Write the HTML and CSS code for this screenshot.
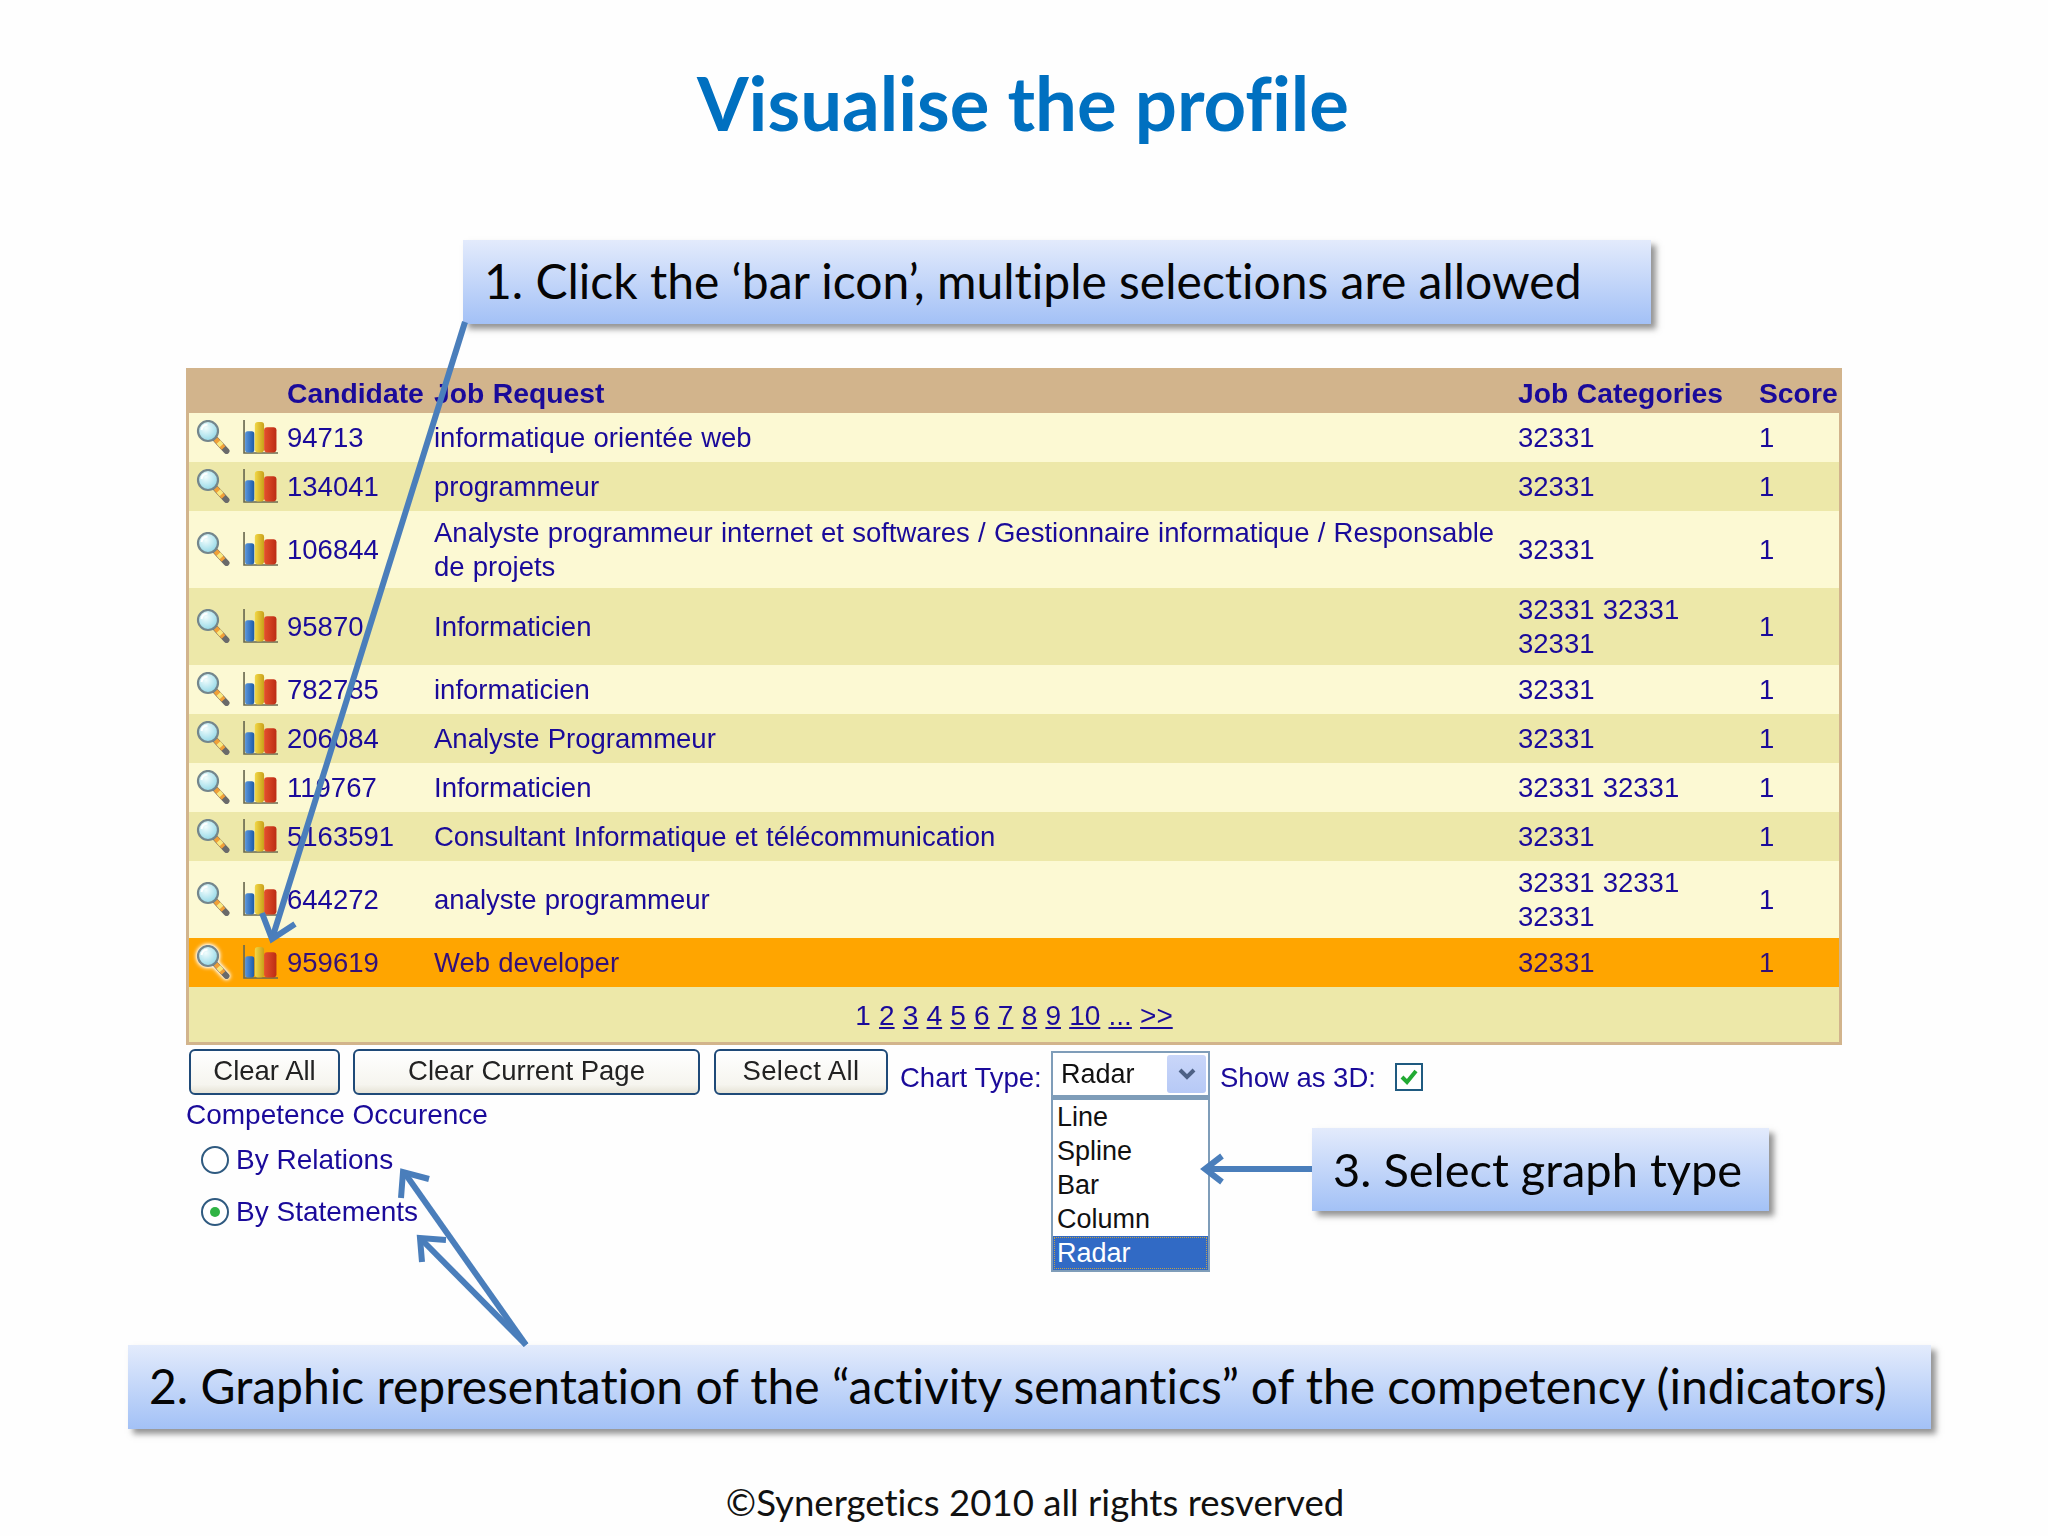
FILE: index.html
```html
<!DOCTYPE html>
<html lang="en">
<head>
<meta charset="utf-8">
<title>Visualise the profile</title>
<link rel="stylesheet" href="styles.css">
</head>
<body>
<svg class="defs" width="0" height="0" aria-hidden="true">
  <defs>
    <radialGradient id="lens" cx="40%" cy="35%" r="70%"><stop offset="0" stop-color="#f2fdfd"/><stop offset="1" stop-color="#8fd6e6"/></radialGradient>
    <linearGradient id="blueBar" x1="0" x2="1"><stop offset="0" stop-color="#5a96dc"/><stop offset="1" stop-color="#1c5aa8"/></linearGradient>
    <linearGradient id="yellowBar" x1="0" x2="1"><stop offset="0" stop-color="#f2d848"/><stop offset="1" stop-color="#c8a018"/></linearGradient>
    <linearGradient id="redBar" x1="0" x2="1"><stop offset="0" stop-color="#e4502c"/><stop offset="1" stop-color="#bc2c14"/></linearGradient>
    <symbol id="icon-lens" viewBox="0 0 34 34">
      <path d="M17 17 L30 31" stroke="#6a6a6a" stroke-width="6" stroke-linecap="round"/>
      <path d="M19 19 L27 28" stroke="#f0a038" stroke-width="5"/>
      <path d="M22 22 L25 25.5" stroke="#f8e880" stroke-width="5"/>
      <circle cx="11.5" cy="11" r="10" fill="url(#lens)" stroke="#74868c" stroke-width="2.2"/>
      <path d="M5 10 A6.5 6.5 0 0 1 11 4.5" fill="none" stroke="#fff" stroke-width="2"/>
    </symbol>
    <symbol id="icon-bars" viewBox="0 0 34 33">
      <path d="M1 0 V32 H34" fill="none" stroke="#6a6a50" stroke-width="1.6"/>
      <rect x="2" y="11" width="9" height="20.5" rx="2.5" fill="url(#blueBar)"/>
      <rect x="11.5" y="2" width="9" height="29.5" rx="3" fill="url(#yellowBar)"/>
      <rect x="20.5" y="7" width="12" height="24.5" rx="3" fill="url(#redBar)"/>
    </symbol>
  </defs>
</svg>
<main class="slide">
  <h1 class="title">Visualise the profile</h1>
  <div class="callout callout-one">1. Click the ‘bar icon’, multiple selections are allowed</div>

  <div class="shot">
    <table class="grid">
      <colgroup><col class="c-icons"><col class="c-id"><col class="c-job"><col class="c-cat"><col class="c-score"></colgroup>
      <thead>
        <tr><th></th><th>Candidate</th><th>Job Request</th><th>Job Categories</th><th>Score</th></tr>
      </thead>
      <tbody>
        <tr><td class="icons"><svg class="ico"><use href="#icon-lens"/></svg><svg class="ico"><use href="#icon-bars"/></svg></td><td>94713</td><td>informatique orientée web</td><td>32331</td><td>1</td></tr>
        <tr class="alt"><td class="icons"><svg class="ico"><use href="#icon-lens"/></svg><svg class="ico"><use href="#icon-bars"/></svg></td><td>134041</td><td>programmeur</td><td>32331</td><td>1</td></tr>
        <tr><td class="icons"><svg class="ico"><use href="#icon-lens"/></svg><svg class="ico"><use href="#icon-bars"/></svg></td><td>106844</td><td>Analyste programmeur internet et softwares / Gestionnaire informatique / Responsable de projets</td><td>32331</td><td>1</td></tr>
        <tr class="alt"><td class="icons"><svg class="ico"><use href="#icon-lens"/></svg><svg class="ico"><use href="#icon-bars"/></svg></td><td>95870</td><td>Informaticien</td><td>32331 32331 32331</td><td>1</td></tr>
        <tr><td class="icons"><svg class="ico"><use href="#icon-lens"/></svg><svg class="ico"><use href="#icon-bars"/></svg></td><td>782785</td><td>informaticien</td><td>32331</td><td>1</td></tr>
        <tr class="alt"><td class="icons"><svg class="ico"><use href="#icon-lens"/></svg><svg class="ico"><use href="#icon-bars"/></svg></td><td>206084</td><td>Analyste Programmeur</td><td>32331</td><td>1</td></tr>
        <tr><td class="icons"><svg class="ico"><use href="#icon-lens"/></svg><svg class="ico"><use href="#icon-bars"/></svg></td><td>119767</td><td>Informaticien</td><td>32331 32331</td><td>1</td></tr>
        <tr class="alt"><td class="icons"><svg class="ico"><use href="#icon-lens"/></svg><svg class="ico"><use href="#icon-bars"/></svg></td><td>5163591</td><td>Consultant Informatique et télécommunication</td><td>32331</td><td>1</td></tr>
        <tr><td class="icons"><svg class="ico"><use href="#icon-lens"/></svg><svg class="ico"><use href="#icon-bars"/></svg></td><td>644272</td><td>analyste programmeur</td><td>32331 32331 32331</td><td>1</td></tr>
        <tr class="selected"><td class="icons"><svg class="ico ico-halo"><use href="#icon-lens"/></svg><svg class="ico"><use href="#icon-bars"/></svg></td><td>959619</td><td>Web developer</td><td>32331</td><td>1</td></tr>
      </tbody>
      <tfoot>
        <tr><td colspan="5" class="pager"><span>1</span> <a>2</a> <a>3</a> <a>4</a> <a>5</a> <a>6</a> <a>7</a> <a>8</a> <a>9</a> <a>10</a> <a>...</a> <a>&gt;&gt;</a></td></tr>
      </tfoot>
    </table>

    <div class="controls">
      <button class="btn btn-all">Clear All</button>
      <button class="btn btn-page">Clear Current Page</button>
      <button class="btn btn-select">Select All</button>
      <span class="label label-chart">Chart Type:</span>
      <div class="select">
        <span class="select-value">Radar</span>
        <span class="select-arrow"><svg width="18" height="12" viewBox="0 0 18 12"><path d="M2 2 L9 9 L16 2" fill="none" stroke="#4d6185" stroke-width="4"/></svg></span>
        <ul class="listbox">
          <li>Line</li><li>Spline</li><li>Bar</li><li>Column</li><li class="current">Radar</li>
        </ul>
      </div>
      <span class="label label-3d">Show as 3D:</span>
      <span class="check"><svg width="20" height="20" viewBox="0 0 20 20"><path d="M3 10 L8 15 L17 4" fill="none" stroke="#22aa33" stroke-width="4"/></svg></span>
    </div>

    <div class="occurence">
      <div class="occ-title">Competence Occurence</div>
      <div class="radio-row"><span class="radio"></span><span>By Relations</span></div>
      <div class="radio-row"><span class="radio on"></span><span>By Statements</span></div>
    </div>
  </div>

  <div class="callout callout-three">3. Select graph type</div>
  <div class="callout callout-two">2. Graphic representation of the “activity semantics” of the competency (indicators)</div>
  <p class="footer">©Synergetics 2010 all rights resverved</p>

  <svg class="arrows" width="2048" height="1536" viewBox="0 0 2048 1536" aria-hidden="true">
    <g fill="none" stroke="#4a7ebb" stroke-width="6">
      <path d="M465 322 L272 939"/>
      <path d="M295 924 L272 939 L262 913"/>
      <path d="M526 1345 L404 1172"/>
      <path d="M401 1198 L403 1172 L429 1179"/>
      <path d="M526 1345 L420 1238"/>
      <path d="M422 1262 L420 1238 L446 1240"/>
      <path d="M1312 1169 L1206 1169"/>
      <path d="M1222 1156 L1205 1169 L1222 1182"/>
    </g>
  </svg>
</main>
</body>
</html>
```
FILE: styles.css
```css
* { box-sizing: border-box; }
html, body { margin: 0; padding: 0; background: #fff; }
.defs { position: absolute; }
.slide {
  position: relative;
  width: 2048px;
  height: 1536px;
  overflow: hidden;
  background: #fefefe;
  display: flex;
  flex-direction: column;
  font-family: "Lato", "Liberation Sans", sans-serif;
  font-variant-ligatures: none;
}
.title {
  margin: 59px 0 0;
  height: 88px;
  line-height: 88px;
  text-align: center;
  font-size: 74.3px;
  font-weight: 700;
  color: #0070c0;
  padding-right: 2px;
}
.callout {
  background: linear-gradient(#e3ebfc, #a3c1f6);
  box-shadow: 5px 5px 6px rgba(60, 60, 60, .55);
  color: #050505;
  font-size: 48px;
  height: 84px;
  line-height: 82px;
  padding-left: 21px;
  white-space: nowrap;
}
.callout-one { margin: 93px 0 0 463px; width: 1188px; }
.shot { margin: 44px 0 0 186px; width: 1656px; filter: blur(.45px); }
.grid {
  width: 1656px;
  table-layout: fixed;
  border-collapse: separate;
  border-spacing: 0;
  border: 3px solid #d2b48c;
  border-top-width: 0;
  font-family: "Liberation Sans", Arial, sans-serif;
  font-size: 27.5px;
  word-spacing: .6px;
  line-height: 34px;
  color: #1a0a9a;
}
.c-icons { width: 98px; }
.c-id { width: 147px; }
.c-job { width: 1084px; }
.c-cat { width: 241px; }
.grid th {
  background: #d2b48c;
  height: 45px;
  padding: 4px 0 0;
  text-align: left;
  font-size: 28.3px;
  font-weight: 700;
  white-space: nowrap;
}
.grid td { padding: 5px 16px 4px 0; height: 49px; background: #fcf9d3; }
.grid tr.alt td { background: #ede8a9; }
.grid tr.selected td { background: #ffa500; color: #33107a; }
.grid td.icons { padding: 0 0 1px 7px; white-space: nowrap; font-size: 0; line-height: 0; }
.ico { width: 35px; height: 34px; display: inline-block; vertical-align: middle; margin-right: 12px; }
.ico-halo { filter: drop-shadow(0 0 2px #fff) drop-shadow(0 0 1px #fff); }
.grid td.pager { height: 55px; padding: 3px 0 0; text-align: center; background: #ede8a9; font-size: 28px; word-spacing: .4px; }
.pager a { text-decoration: underline; }
.controls {
  display: flex;
  align-items: flex-start;
  height: 53px;
  padding: 4px 0 0 3px;
  font-family: "Liberation Sans", Arial, sans-serif;
  font-size: 27.5px;
}
.btn {
  height: 46px;
  padding: 0 0 2px;
  border: 2.5px solid #1f4a78;
  border-radius: 6px;
  background: linear-gradient(#fff, #f6f5ef 80%, #e6e3d6);
  color: #222;
  font: inherit;
  line-height: 34px;
}
.btn-all { width: 151px; margin-right: 13px; }
.btn-page { width: 347px; margin-right: 14px; }
.btn-select { width: 174px; margin-right: 12px; letter-spacing: .4px; }
.label { color: #1a0a9a; line-height: 34px; margin-top: 12px; white-space: nowrap; }
.label-chart { width: 151px; }
.select {
  position: relative;
  width: 159px;
  height: 46px;
  margin-top: 2px;
  border: 2px solid #7f9db9;
  background: #fff;
  color: #111;
  font-size: 27px;
}
.select-value { position: absolute; left: 8px; top: 3px; line-height: 36px; }
.select-arrow {
  position: absolute;
  right: 2px;
  top: 2px;
  width: 39px;
  height: 38px;
  border-radius: 3px;
  background: linear-gradient(#c9d6f9, #b6c9f6);
  display: flex;
  align-items: center;
  justify-content: center;
}
.listbox {
  position: absolute;
  left: -2px;
  top: 43px;
  width: 159px;
  margin: 0;
  padding: 0;
  list-style: none;
  border: 2px solid #7f9db9;
  border-top-width: 4px;
  background: #fff;
  color: #111;
}
.listbox li { height: 34px; line-height: 34px; padding-left: 4px; }
.listbox li.current { background: #316ac5; color: #fff; outline: 1px dotted #c2a24a; outline-offset: -2px; }
.label-3d { margin-left: 10px; width: 175px; }
.check {
  width: 28px;
  height: 28px;
  margin-top: 14px;
  border: 2px solid #1f5a80;
  background: #fff;
  display: flex;
  align-items: center;
  justify-content: center;
}
.occurence {
  font-family: "Liberation Sans", Arial, sans-serif;
  font-size: 28px;
  line-height: 34px;
  color: #1a0a9a;
}
.occ-title { height: 36px; }
.radio-row { display: flex; align-items: center; height: 52px; padding-left: 15px; gap: 7px; }
.radio {
  width: 28px;
  height: 28px;
  border-radius: 50%;
  border: 2px solid #2f5a80;
  background: #fff;
  display: inline-block;
  position: relative;
}
.radio.on::after {
  content: "";
  position: absolute;
  left: 7px;
  top: 7px;
  width: 10px;
  height: 10px;
  border-radius: 50%;
  background: #2fb344;
}
.callout-three { position: absolute; left: 1312px; top: 1128px; width: 457px; height: 83px; font-size: 47px; }
.callout-two { position: absolute; left: 128px; top: 1345px; width: 1803px; }
.footer {
  position: absolute;
  left: 0;
  right: 0;
  top: 1479px;
  margin: 0;
  text-align: center;
  color: #111;
  font-size: 36.6px;
  line-height: 46px;
  padding-left: 22px;
}
.arrows { position: absolute; left: 0; top: 0; pointer-events: none; }
```
